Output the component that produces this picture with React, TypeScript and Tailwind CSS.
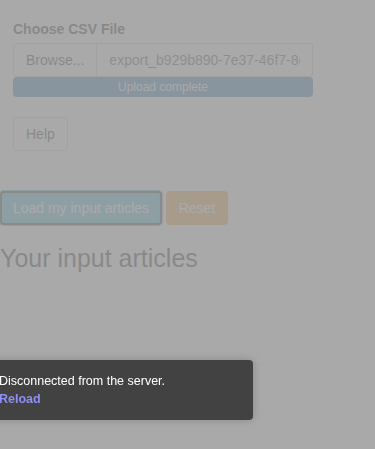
import { useState } from "react";

const App = () => {
    const [fileName] = useState("export_b929b890-7e37-46f7-8c1a-2d4e.csv");

    return (
        <div className="relative min-h-[449px] w-full overflow-hidden bg-white font-['Liberation_Sans',Arial,sans-serif] text-[14px] leading-5 text-[#333]">
            {/* page content */}
            <div className="flex flex-col pt-[19px]">
                <div className="flex flex-col px-[13px]">
                    <label className="mb-1 font-bold">Choose CSV File</label>
                    <div className="flex h-[34px] w-[300px]">
                        <span className="flex items-center rounded-l border border-[#ccc] bg-white px-3 text-[#333]">Browse...</span>
                        <input
                            readOnly
                            value={fileName}
                            className="min-w-0 flex-1 rounded-r border border-l-0 border-[#ccc] bg-white px-3 text-[14px] text-[#555] outline-none"
                        />
                    </div>
                    <div className="flex h-5 w-[300px] items-center justify-center rounded bg-[#337ab7] text-[12px] text-white">
                        Upload complete
                    </div>
                    <div className="mt-5">
                        <button className="h-[34px] rounded border border-[#ccc] bg-white px-3 text-[#333]">Help</button>
                    </div>
                </div>

                <div className="mt-10 flex items-center gap-1">
                    <button className="h-[34px] w-[162px] rounded border-2 border-[#3f3f3f] bg-[#5bc0de] text-white ring-1 ring-[#6fb0cc]">
                        Load my input articles
                    </button>
                    <button className="h-[34px] w-[62px] rounded border border-[#eea236] bg-[#f0ad4e] text-white">Reset</button>
                </div>

                <h3 className="mt-5 text-[25px] leading-[27px] font-medium text-[#333]">Your input articles</h3>

                <hr className="mt-[91px] border-t border-[#eeeeee]" />
            </div>

            {/* disconnected overlay */}
            <div className="fixed inset-0 bg-[#999999]/84" />

            {/* notification */}
            <div className="fixed left-[-11px] top-[360px] w-[264px] rounded bg-[#424242] py-3 pl-[10px] text-[12.5px] leading-[18px] text-white shadow-[0_0_10px_rgba(0,0,0,0.2)]">
                <div>Disconnected from the server.</div>
                <a href="#" className="font-bold text-[#8f8ef5]">Reload</a>
            </div>
        </div>
    );
};

export default App;
